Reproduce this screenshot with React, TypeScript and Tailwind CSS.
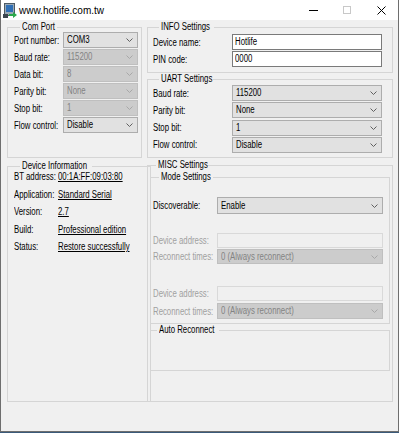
import React from "react";

const T = ({ children, className = "" }: { children: React.ReactNode; className?: string }) => (
  <span className={`inline-block origin-left scale-x-[0.78] whitespace-nowrap ${className}`}>{children}</span>
);

const Chev = ({ c }: { c: string }) => (
  <svg width="7" height="4" viewBox="0 0 7 4" className="shrink-0">
    <polyline points="0.5,0.5 3.5,3.5 6.5,0.5" fill="none" stroke={c} strokeWidth="1" />
  </svg>
);

function Combo({ value, disabled, className }: { value: string; disabled?: boolean; className: string }) {
  return (
    <div
      className={`flex items-center justify-between overflow-hidden border pl-[3px] pr-[4px] ${
        disabled ? "border-[#bfbfbf] bg-[#cccccc] text-[#838383]" : "border-[#adadad] bg-[#e1e1e1] text-black"
      } ${className}`}
    >
      <div className="min-w-0 flex-1 leading-none">
        <T>{value}</T>
      </div>
      <Chev c={disabled ? "#a8a8a8" : "#606060"} />
    </div>
  );
}

function Field({ value, disabled, className }: { value: string; disabled?: boolean; className: string }) {
  return (
    <div
      className={`flex items-center border pl-[2px] ${
        disabled ? "border-[#d9d9d9] bg-[#f0f0f0]" : "border-[#7a7a7a] bg-white text-black"
      } ${className}`}
    >
      <div className="leading-none">
        <T>{value}</T>
      </div>
    </div>
  );
}

function Group({
  title,
  lw,
  className,
  children,
}: {
  title: string;
  lw: string;
  className: string;
  children?: React.ReactNode;
}) {
  return (
    <fieldset className={`border border-[#d5d5d5] ${className}`}>
      <legend className={`ml-[6px] px-[2px] h-[12px] leading-[12px] overflow-visible ${lw}`}>
        <T>{title}</T>
      </legend>
      {children}
    </fieldset>
  );
}

function Row({ label, children, lw, h = "h-[16px]" }: { label: string; children: React.ReactNode; lw: string; h?: string }) {
  return (
    <div className={`flex items-center ${h}`}>
      <div className={`shrink-0 ${lw}`}>
        <T>{label}</T>
      </div>
      {children}
    </div>
  );
}

function Info({ label, value }: { label: string; value: string }) {
  return (
    <div className="flex items-center h-[17.5px]">
      <div className="w-[44px] shrink-0">
        <T>{label}</T>
      </div>
      <T className="underline underline-offset-[1px]">{value}</T>
    </div>
  );
}

export default function App() {
  return (
    <div className="w-[399px] h-[433px] bg-[#3a5a7a]">
      <div className="w-[399px] h-[432px] border-l border-r border-b border-[#6e6e6e] bg-[#f0f0f0] text-[10px] text-black font-['Liberation_Sans',sans-serif] flex flex-col">
        {/* title bar */}
        <div className="h-[20px] bg-white flex items-center shrink-0">
          <svg width="14" height="15" viewBox="0 0 14 15" className="ml-[2px]">
            <rect x="1.5" y="0.5" width="10" height="12" fill="#9aa9b6" stroke="#4d5b66" />
            <rect x="3" y="2" width="7" height="7" fill="#2f6fb6" />
            <rect x="0" y="11" width="5" height="4" fill="#3d4750" />
            <path d="M6 11 L10 11 L10 9 L14 12 L10 15 L10 13 L6 13 Z" fill="#2aa84a" />
          </svg>
          <span className="ml-[2px] text-[10px]">www.hotlife.com.tw</span>
          <div className="ml-auto flex items-center h-full">
            <div className="w-[34px] h-full flex items-center justify-center">
              <div className="w-[9px] h-px bg-black" />
            </div>
            <div className="w-[34px] h-full flex items-center justify-center">
              <div className="w-[8px] h-[8px] border border-[#c8c8c8]" />
            </div>
            <div className="w-[34px] h-full flex items-center justify-center">
              <svg width="9" height="9" viewBox="0 0 9 9">
                <path d="M0.5 0.5 L8.5 8.5 M8.5 0.5 L0.5 8.5" stroke="#000" strokeWidth="1" />
              </svg>
            </div>
          </div>
        </div>

        {/* body */}
        <div className="flex pt-[1px] pl-[6px] gap-[5px]">
          {/* left */}
          <div className="flex flex-col w-[135px] gap-[2px]">
            <Group title="Com Port" lw="w-[37px]" className="h-[137px] pl-[6px] pr-[3px]">
              <div className="-mt-[1px] flex flex-col gap-[1px]">
                <Row label="Port number:" lw="w-[49px]">
                  <Combo value="COM3" className="h-[16px] flex-1" />
                </Row>
                <Row label="Baud rate:" lw="w-[49px]">
                  <Combo value="115200" disabled className="h-[16px] flex-1" />
                </Row>
                <Row label="Data bit:" lw="w-[49px]">
                  <Combo value="8" disabled className="h-[16px] flex-1" />
                </Row>
                <Row label="Parity bit:" lw="w-[49px]">
                  <Combo value="None" disabled className="h-[16px] flex-1" />
                </Row>
                <Row label="Stop bit:" lw="w-[49px]">
                  <Combo value="1" disabled className="h-[16px] flex-1" />
                </Row>
                <Row label="Flow control:" lw="w-[49px]">
                  <Combo value="Disable" className="h-[16px] flex-1" />
                </Row>
              </div>
            </Group>
            <Group title="Device Information" lw="w-[72px]" className="h-[242px] pl-[6px]">
              <div className="-mt-[4px] flex flex-col">
                <Info label="BT address:" value="00:1A:FF:09:03:80" />
                <Info label="Application:" value="Standard Serial" />
                <Info label="Version:" value="2.7" />
                <Info label="Build:" value="Professional edition" />
                <Info label="Status:" value="Restore successfully" />
              </div>
            </Group>
          </div>

          {/* right */}
          <div className="flex flex-col w-[246px]">
            <Group title="INFO Settings" lw="w-[55px]" className="h-[52px] pl-[5px] pr-[10px]">
              <div className="mt-[1px] flex flex-col gap-[1px]">
                <Row label="Device name:" lw="w-[79px]">
                  <Field value="Hotlife" className="h-[16px] flex-1" />
                </Row>
                <Row label="PIN code:" lw="w-[79px]">
                  <Field value="0000" className="h-[16px] flex-1" />
                </Row>
              </div>
            </Group>
            <Group title="UART Settings" lw="w-[54px]" className="h-[85px] pl-[5px] pr-[10px]">
              <div className="flex flex-col gap-[1.3px]">
                <Row label="Baud rate:" lw="w-[79px]">
                  <Combo value="115200" className="h-[16px] flex-1" />
                </Row>
                <Row label="Parity bit:" lw="w-[79px]">
                  <Combo value="None" className="h-[16px] flex-1" />
                </Row>
                <Row label="Stop bit:" lw="w-[79px]">
                  <Combo value="1" className="h-[16px] flex-1" />
                </Row>
                <Row label="Flow control:" lw="w-[79px]">
                  <Combo value="Disable" className="h-[16px] flex-1" />
                </Row>
              </div>
            </Group>
            <Group title="MISC Settings" lw="w-[52px]" className="mt-[1px] h-[243px] px-[2px]">
              <Group title="Mode Settings" lw="w-[54px]" className="h-[153px] pl-[2px] pr-[6px]">
                <div className="mt-[14px] flex flex-col">
                  <Row label="Discoverable:" lw="w-[64px]" h="h-[17px]">
                    <Combo value="Enable" className="h-[17px] flex-1" />
                  </Row>
                  <div className="h-[19px]" />
                  <div className="flex flex-col text-[#a0a0a0]">
                    <Row label="Device address:" lw="w-[64px]" h="h-[15px]">
                      <Field value="" disabled className="h-[15px] flex-1" />
                    </Row>
                    <div className="h-[1px]" />
                    <Row label="Reconnect times:" lw="w-[64px]" h="h-[15px]">
                      <Combo value="0 (Always reconnect)" disabled className="h-[15px] flex-1" />
                    </Row>
                    <div className="h-[22px]" />
                    <Row label="Device address:" lw="w-[64px]" h="h-[15px]">
                      <Field value="" disabled className="h-[15px] flex-1" />
                    </Row>
                    <div className="h-[2px]" />
                    <Row label="Reconnect times:" lw="w-[64px]">
                      <Combo value="0 (Always reconnect)" disabled className="h-[16px] flex-1" />
                    </Row>
                  </div>
                </div>
              </Group>
              <Group title="Auto Reconnect" lw="w-[62px]" className="h-[47px]" />
            </Group>
          </div>
        </div>
      </div>
    </div>
  );
}
